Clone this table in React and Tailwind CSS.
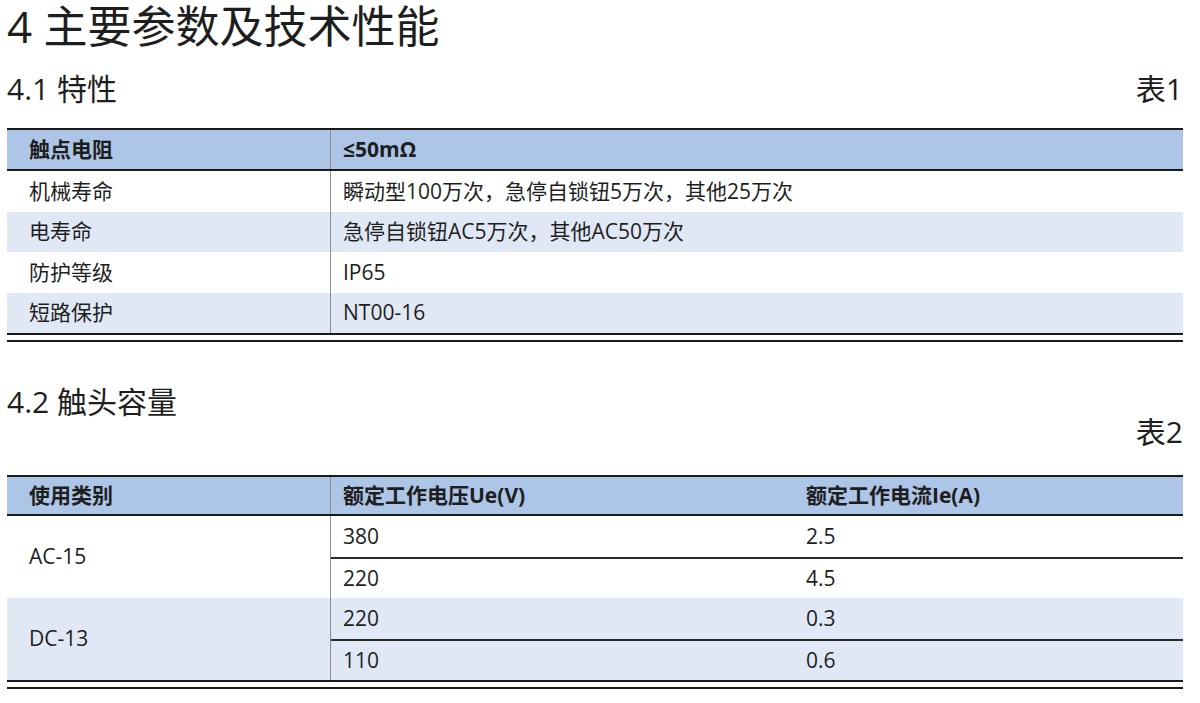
import React from "react";

// Spec sheet page: section 4, two parameter tables
const rows1 = [
  { name: "机械寿命", value: "瞬动型100万次，急停自锁钮5万次，其他25万次", shade: false },
  { name: "电寿命", value: "急停自锁钮AC5万次，其他AC50万次", shade: true },
  { name: "防护等级", value: "IP65", shade: false },
  { name: "短路保护", value: "NT00-16", shade: true },
];

const groups2 = [
  { cat: "AC-15", shade: false, rows: [["380", "2.5"], ["220", "4.5"]] },
  { cat: "DC-13", shade: true, rows: [["220", "0.3"], ["110", "0.6"]] },
];

function DoubleRule() {
  return (
    <div>
      <div className="h-[2px] bg-[#1a1a1a]" />
      <div className="h-[5px]" />
      <div className="h-[2px] bg-[#1a1a1a]" />
    </div>
  );
}

function Table1() {
  return (
    <div className="mt-[21px] border-t-2 border-[#1a1a1a] text-[21px]">
      <div className="flex h-[39px] bg-[#adc5e7] font-bold">
        <div className="w-[323px] pl-[22px] flex items-center">触点电阻</div>
        <div className="w-px bg-[#8c8c8c]" />
        <div className="flex-1 pl-[12px] flex items-center">≤50mΩ</div>
      </div>
      <div className="h-[2px] bg-[#1a1a1a]" />
      {rows1.map((r) => (
        <div key={r.name} className={`flex h-[40.5px] ${r.shade ? "bg-[#e0e8f5]" : "bg-white"}`}>
          <div className="w-[323px] pl-[22px] flex items-center">{r.name}</div>
          <div className="w-px bg-[#8c8c8c]" />
          <div className="flex-1 pl-[12px] flex items-center">{r.value}</div>
        </div>
      ))}
      <DoubleRule />
    </div>
  );
}

function Table2() {
  return (
    <div className="mt-[28px] border-t-2 border-[#1a1a1a] text-[21px]">
      <div className="flex h-[37px] bg-[#adc5e7] font-bold">
        <div className="w-[323px] pl-[22px] flex items-center">使用类别</div>
        <div className="w-px bg-[#8c8c8c]" />
        <div className="w-[461px] pl-[12px] flex items-center">额定工作电压Ue(V)</div>
        <div className="flex-1 pl-[14px] flex items-center">额定工作电流Ie(A)</div>
      </div>
      <div className="h-[2px] bg-[#1a1a1a]" />
      {groups2.map((g) => (
        <div key={g.cat} className={`flex ${g.shade ? "bg-[#e0e8f5]" : "bg-white"}`}>
          <div className="w-[323px] pl-[22px] flex items-center">{g.cat}</div>
          <div className="w-px bg-[#8c8c8c]" />
          <div className="flex-1 flex flex-col">
            {g.rows.map((r, i) => (
              <React.Fragment key={i}>
                {i > 0 && <div className="h-[1.5px] bg-[#2a2a2a]" />}
                <div className={`flex items-center ${i > 0 ? "h-[39.5px]" : "h-[41px]"}`}>
                  <div className="w-[461px] pl-[12px]">{r[0]}</div>
                  <div className="flex-1 pl-[14px]">{r[1]}</div>
                </div>
              </React.Fragment>
            ))}
          </div>
        </div>
      ))}
      <DoubleRule />
    </div>
  );
}

export default function App() {
  return (
    <div className="w-[1200px] h-[703px] overflow-hidden bg-white pl-[7px] pr-[17px] text-[#1e1e1e] font-['Open_Sans','Noto_Sans_CJK_SC',sans-serif]">
      <h1 className="text-[44px] leading-[52px]">4 主要参数及技术性能</h1>

      <div className="mt-[19px] h-[36px] flex items-center justify-between text-[30px] leading-[36px]">
        <h2>4.1 特性</h2>
        <span>表1</span>
      </div>
      <Table1 />

      <h2 className="mt-[45px] text-[30px] leading-[30px]">4.2 触头容量</h2>
      <div className="text-right text-[30px] leading-[30px]">表2</div>
      <Table2 />
    </div>
  );
}
